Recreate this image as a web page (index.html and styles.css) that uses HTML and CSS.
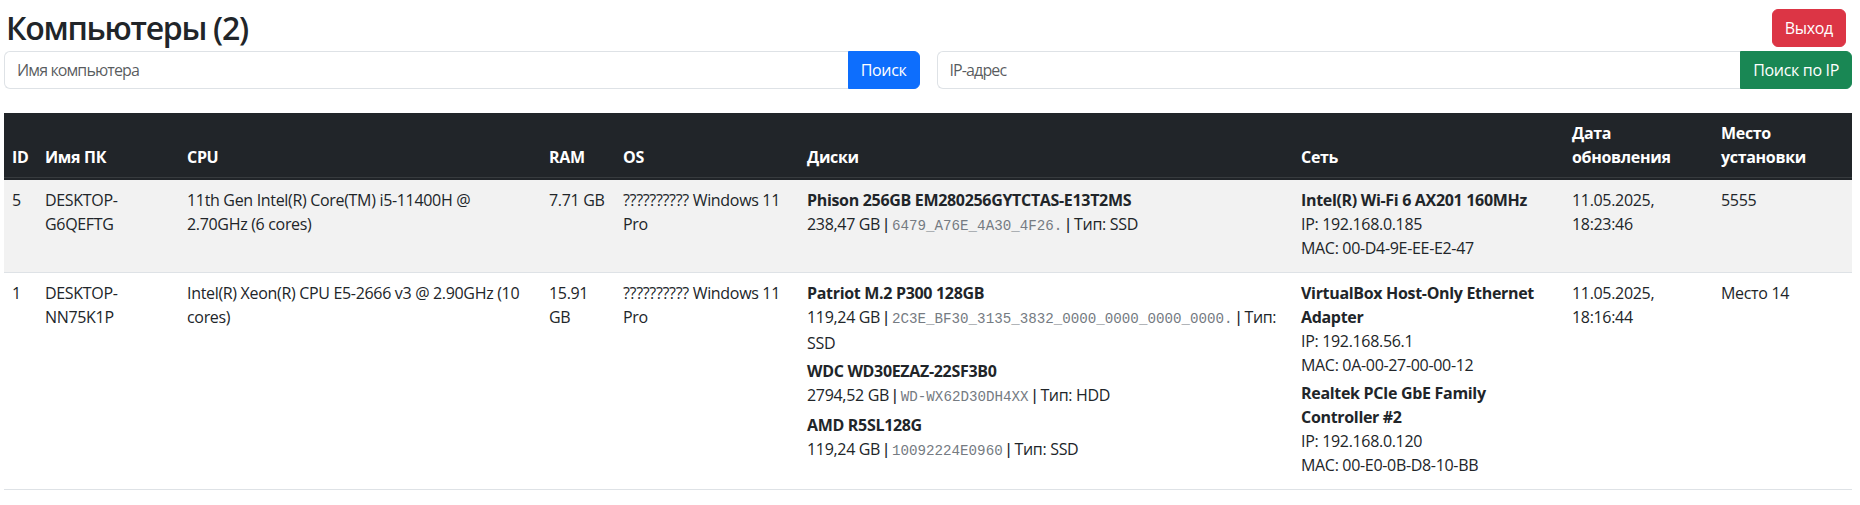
FILE: index.html
```html
<!DOCTYPE html>
<html lang="ru">
<head>
<meta charset="utf-8">
<title>Компьютеры</title>
<link rel="stylesheet" href="styles.css">
</head>
<body>
<div class="page">
  <div class="topbar">
    <h2 class="title">Компьютеры (2)</h2>
    <button class="btn btn-danger btn-exit">Выход</button>
  </div>
  <div class="search-row">
    <div class="input-group">
      <input class="form-control" type="text" placeholder="Имя компьютера">
      <button class="btn btn-primary">Поиск</button>
    </div>
    <div class="input-group">
      <input class="form-control" type="text" placeholder="IP-адрес">
      <button class="btn btn-success">Поиск по IP</button>
    </div>
  </div>
  <table class="table">
    <colgroup>
      <col class="c-id"><col class="c-name"><col class="c-cpu"><col class="c-ram"><col class="c-os">
      <col class="c-disk"><col class="c-net"><col class="c-date"><col class="c-place">
    </colgroup>
    <thead>
      <tr>
        <th>ID</th><th>Имя ПК</th><th>CPU</th><th>RAM</th><th>OS</th><th>Диски</th><th>Сеть</th><th>Дата обновления</th><th>Место установки</th>
      </tr>
    </thead>
    <tbody>
      <tr class="striped">
        <td>5</td>
        <td>DESKTOP-G6QEFTG</td>
        <td>11th Gen Intel(R) Core(TM) i5-11400H @ 2.70GHz (6 cores)</td>
        <td>7.71 GB</td>
        <td>?????????? Windows 11 Pro</td>
        <td>
          <div class="item">
            <div class="item-name">Phison 256GB EM280256GYTCTAS-E13T2MS</div>
            <div><span class="size">238,47 GB</span> <span class="sep">|</span> <span class="serial">6479_A76E_4A30_4F26.</span> <span class="sep">|</span> <span class="tlabel">Тип:</span> <span class="dtype">SSD</span></div>
          </div>
        </td>
        <td>
          <div class="item">
            <div class="item-name">Intel(R) Wi-Fi 6 AX201 160MHz</div>
            <div>IP: 192.168.0.185</div>
            <div>MAC: 00-D4-9E-EE-E2-47</div>
          </div>
        </td>
        <td>11.05.2025, 18:23:46</td>
        <td>5555</td>
      </tr>
      <tr>
        <td>1</td>
        <td>DESKTOP-NN75K1P</td>
        <td>Intel(R) Xeon(R) CPU E5-2666 v3 @ 2.90GHz (10 cores)</td>
        <td>15.91 GB</td>
        <td>?????????? Windows 11 Pro</td>
        <td>
          <div class="item">
            <div class="item-name">Patriot M.2 P300 128GB</div>
            <div><span class="size">119,24 GB</span> <span class="sep">|</span> <span class="serial">2C3E_BF30_3135_3832_0000_0000_0000_0000.</span> <span class="sep">|</span> <span class="tlabel">Тип:</span> <span class="dtype">SSD</span></div>
          </div>
          <div class="item">
            <div class="item-name">WDC WD30EZAZ-22SF3B0</div>
            <div><span class="size">2794,52 GB</span> <span class="sep">|</span> <span class="serial">WD-WX62D30DH4XX</span> <span class="sep">|</span> <span class="tlabel">Тип:</span> <span class="dtype">HDD</span></div>
          </div>
          <div class="item">
            <div class="item-name">AMD R5SL128G</div>
            <div><span class="size">119,24 GB</span> <span class="sep">|</span> <span class="serial">10092224E0960</span> <span class="sep">|</span> <span class="tlabel">Тип:</span> <span class="dtype">SSD</span></div>
          </div>
        </td>
        <td>
          <div class="item">
            <div class="item-name">VirtualBox Host-Only Ethernet Adapter</div>
            <div>IP: 192.168.56.1</div>
            <div>MAC: 0A-00-27-00-00-12</div>
          </div>
          <div class="item">
            <div class="item-name">Realtek PCIe GbE Family Controller #2</div>
            <div>IP: 192.168.0.120</div>
            <div>MAC: 00-E0-0B-D8-10-BB</div>
          </div>
        </td>
        <td>11.05.2025, 18:16:44</td>
        <td>Место 14</td>
      </tr>
    </tbody>
  </table>
</div>
</body>
</html>
```

FILE: styles.css
```css
* { box-sizing: border-box; }

html, body {
  margin: 0;
  padding: 0;
  background: #fff;
}

body {
  font-family: "Open Sans", "Noto Sans", sans-serif;
  font-size: 16px;
  line-height: 24px;
  color: #212529;
  letter-spacing: -0.02em;
}

.page {
  padding: 9px 8px 0 4px;
}

.topbar {
  display: flex;
  justify-content: space-between;
  align-items: center;
  height: 38px;
  margin-bottom: 4px;
}

.title {
  margin: 0;
  font-size: 32px;
  font-weight: 600;
  line-height: 38px;
  padding-left: 2px;
  letter-spacing: -0.04em;
}

.btn {
  font-family: inherit;
  font-size: 16px;
  line-height: 24px;
  padding: 6px 12px;
  border: 1px solid transparent;
  border-radius: 6px;
  color: #fff;
  letter-spacing: -0.02em;
  cursor: pointer;
  white-space: nowrap;
}

.btn-danger { background: #dc3545; border-color: #dc3545; }
.btn-primary { background: #0d6efd; border-color: #0d6efd; }
.btn-success { background: #198754; border-color: #198754; }

.btn-exit { margin-right: 6px; }

.search-row {
  display: flex;
  gap: 17px;
  margin-bottom: 24px;
}

.input-group {
  flex: 1;
  display: flex;
}

.input-group .btn {
  border-top-left-radius: 0;
  border-bottom-left-radius: 0;
}

.form-control {
  flex: 1;
  min-width: 0;
  height: 38px;
  font-family: inherit;
  font-size: 16px;
  line-height: 24px;
  padding: 6px 12px;
  color: #212529;
  background: #fff;
  border: 1px solid #dee2e6;
  border-right: 0;
  border-radius: 6px 0 0 6px;
  letter-spacing: -0.055em;
}

.form-control::placeholder {
  color: rgba(33, 37, 41, 0.75);
}

.table {
  width: 1848px;
  border-collapse: separate;
  border-spacing: 0;
  table-layout: fixed;
}

.c-id { width: 33px; }
.c-name { width: 142px; }
.c-cpu { width: 362px; }
.c-ram { width: 74px; }
.c-os { width: 184px; }
.c-disk { width: 494px; }
.c-net { width: 271px; }
.c-date { width: 149px; }
.c-place { width: 139px; }

.table th,
.table td {
  padding: 8px;
  text-align: left;
  border-bottom: 1px solid #dee2e6;
}

.table thead th {
  background: #212529;
  color: #fff;
  font-weight: 700;
  vertical-align: bottom;
  border-bottom-color: #373b3e;
}

.table tbody tr:first-child td {
  border-top: 2px solid #212529;
}

.table td {
  vertical-align: top;
}

.striped td {
  background: #f2f2f2;
}

.item {
  margin-bottom: 4px;
}

.item-name {
  font-weight: 700;
}

.sep {
  font-family: "Liberation Sans", sans-serif;
  letter-spacing: 0;
}

.serial {
  font-family: "Liberation Mono", "DejaVu Sans Mono", monospace;
  font-size: 14.2px;
  letter-spacing: 0;
  color: #757b82;
}
```
